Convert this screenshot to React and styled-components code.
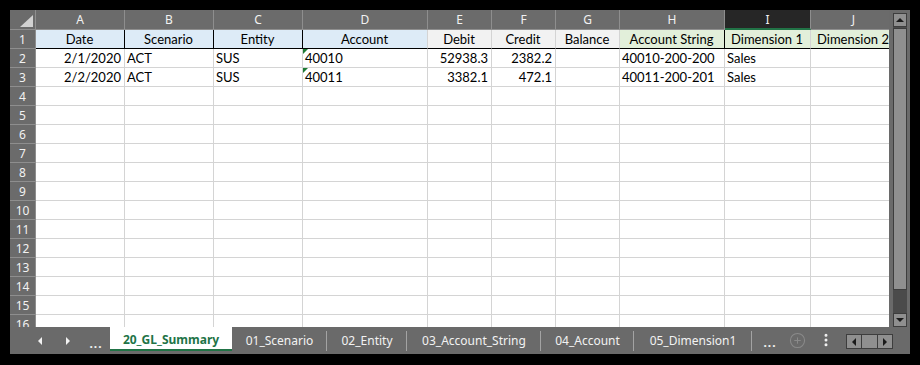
import React from 'react';
import styled, { createGlobalStyle } from 'styled-components';
import { CirclePlus, EllipsisVertical } from 'lucide-react';

const Global = createGlobalStyle`
  body {
    margin: 0;
    background: #000;
  }
`;

const Frame = styled.div`
  width: 920px;
  height: 365px;
  box-sizing: border-box;
  padding: 10px 10px 11px 10px;
  background: #000;
  display: flex;
  flex-direction: column;
`;

const Main = styled.div`
  display: flex;
  height: 317px;
`;

const Viewport = styled.div`
  flex: 1;
  overflow: hidden;
  background: #fff;
`;

const Sheet = styled.div`
  display: grid;
  grid-template-columns: 26px 89px 89px 89px 125px 64px 64px 64px 105px 86px 86px;
  grid-template-rows: 20px;
  grid-auto-rows: 19px;
  width: max-content;
`;

const ColHead = styled.div`
  box-sizing: border-box;
  background: ${(p) => (p.$selected ? '#262626' : '#6b6b6b')};
  color: #f2f2f2;
  font-family: "Noto Sans", sans-serif;
  font-size: 12px;
  display: flex;
  align-items: center;
  justify-content: center;
  border-right: 1px solid #8e8e8e;
  border-bottom: ${(p) => (p.$selected ? '2px solid #217346' : '1px solid #8e8e8e')};
  position: relative;
`;

const Corner = styled(ColHead)`
  &::after {
    content: '';
    position: absolute;
    right: 2px;
    bottom: 2px;
    width: 0;
    height: 0;
    border-left: 13px solid transparent;
    border-bottom: 12px solid #d2d2d2;
  }
`;

const RowHead = styled.div`
  box-sizing: border-box;
  background: #6b6b6b;
  color: #f2f2f2;
  font-family: "Noto Sans", sans-serif;
  font-size: 12px;
  display: flex;
  align-items: center;
  justify-content: center;
  border-right: 1px solid #8e8e8e;
  border-bottom: 1px solid #8e8e8e;
`;

const Cell = styled.div`
  box-sizing: border-box;
  position: relative;
  background: ${(p) => p.$fill || '#fff'};
  color: #000;
  font-family: Lato, "Liberation Sans", sans-serif;
  font-size: 13px;
  line-height: 18px;
  padding: 0 3px 0 2px;
  white-space: nowrap;
  overflow: hidden;
  text-align: ${(p) => p.$align || 'left'};
  border-right: 1px solid ${(p) => (p.$edge ? '#000' : '#d4d4d4')};
  border-bottom: 1px solid ${(p) => (p.$head ? '#000' : '#d4d4d4')};
`;

const TextFlag = styled.span`
  position: absolute;
  left: 0;
  top: 0;
  width: 0;
  height: 0;
  border-top: 5px solid #1e7b34;
  border-right: 5px solid transparent;
`;

const VScroll = styled.div`
  width: 21px;
  background: #6a6a6a;
  padding: 3px 3px 0 4px;
  box-sizing: border-box;
  display: flex;
  flex-direction: column;
`;

const ScrollButton = styled.div`
  box-sizing: border-box;
  width: 14px;
  height: 14px;
  background: #8f8f8f;
  border: 1px solid #3d3d3d;
  display: flex;
  align-items: center;
  justify-content: center;
  flex-shrink: 0;
`;

const Track = styled.div`
  flex: 1;
  background: #4b4b4b;
  display: flex;
  flex-direction: column;
  padding: 1px 0;
`;

const Thumb = styled.div`
  box-sizing: border-box;
  height: ${(p) => p.$h}px;
  background: #8f8f8f;
  border: 1px solid #3d3d3d;
`;

const Arrow = styled.span`
  width: 0;
  height: 0;
  ${(p) => p.$dir === 'up' && 'border-left: 4px solid transparent; border-right: 4px solid transparent; border-bottom: 4px solid #1a1a1a;'}
  ${(p) => p.$dir === 'down' && 'border-left: 4px solid transparent; border-right: 4px solid transparent; border-top: 4px solid #1a1a1a;'}
  ${(p) => p.$dir === 'left' && `border-top: 4px solid transparent; border-bottom: 4px solid transparent; border-right: 4px solid ${p.$color || '#1a1a1a'};`}
  ${(p) => p.$dir === 'right' && `border-top: 4px solid transparent; border-bottom: 4px solid transparent; border-left: 4px solid ${p.$color || '#1a1a1a'};`}
`;

const TabBar = styled.div`
  height: 27px;
  background: #6a6a6a;
  display: flex;
  align-items: flex-start;
  font-family: "Noto Sans", sans-serif;
  font-size: 12px;
  color: #f2f2f2;
`;

const Nav = styled.div`
  width: 100px;
  height: 27px;
  display: flex;
  align-items: center;
  padding-left: 26px;
  box-sizing: border-box;
`;

const NavSlot = styled.div`
  width: ${(p) => p.$w}px;
  height: 26px;
  display: flex;
  align-items: center;
  justify-content: center;
  flex-shrink: 0;
  color: #f2f2f2;
`;

const Dots = styled.span`
  font-weight: 700;
  letter-spacing: 1px;
  padding-top: 5px;
  font-size: 12px;
`;

const ActiveTab = styled.div`
  width: 122px;
  height: 24px;
  flex-shrink: 0;
  box-sizing: border-box;
  background: #fff;
  border-bottom: 2px solid #217346;
  color: #217346;
  font-weight: 700;
  display: flex;
  align-items: center;
  justify-content: center;
  padding-top: 3px;
`;

const Tab = styled.div`
  width: ${(p) => p.$w}px;
  height: 24px;
  flex-shrink: 0;
  display: flex;
  align-items: center;
  justify-content: center;
  position: relative;
  box-sizing: border-box;
  white-space: nowrap;
  padding-top: 3px;

  &::after {
    content: '';
    position: absolute;
    right: 0;
    top: 4px;
    height: 20px;
    width: 1px;
    background: #a3a3a3;
  }
`;

const HScroll = styled.div`
  display: flex;
  margin-top: 7px;
  height: 15px;
  background: #8f8f8f;
  border: 1px solid #3d3d3d;
  box-sizing: border-box;
`;

const HButton = styled.div`
  width: ${(p) => p.$w}px;
  height: 13px;
  display: flex;
  align-items: center;
  justify-content: center;
  border-right: ${(p) => (p.$split ? '1px solid #3d3d3d' : 'none')};
  box-sizing: border-box;
`;

const headers = ['A', 'B', 'C', 'D', 'E', 'F', 'G', 'H', 'I', 'J'];

const blue = '#ddebf7';
const gray = '#f2f2f2';
const green = '#e2efda';

const titleRow = [
  { v: 'Date', fill: blue, edge: true },
  { v: 'Scenario', fill: blue, edge: true },
  { v: 'Entity', fill: blue, edge: true },
  { v: 'Account', fill: blue },
  { v: 'Debit', fill: gray },
  { v: 'Credit', fill: gray },
  { v: 'Balance', fill: gray },
  { v: 'Account String', fill: green, edge: true },
  { v: 'Dimension 1', fill: green },
  { v: 'Dimension 2', fill: green },
];

const align = ['right', 'left', 'left', 'left', 'right', 'right', 'right', 'left', 'left', 'left'];

const data = [
  ['2/1/2020', 'ACT', 'SUS', '40010', '52938.3', '2382.2', '', '40010-200-200', 'Sales', ''],
  ['2/2/2020', 'ACT', 'SUS', '40011', '3382.1', '472.1', '', '40011-200-201', 'Sales', ''],
];

const tabs = [
  { name: '01_Scenario', w: 95 },
  { name: '02_Entity', w: 80 },
  { name: '03_Account_String', w: 134 },
  { name: '04_Account', w: 93 },
  { name: '05_Dimension1', w: 118 },
];

function App() {
  const rows = [];
  for (let r = 1; r <= 16; r++) {
    rows.push(<RowHead key={'h' + r}>{r}</RowHead>);
    for (let c = 0; c < 10; c++) {
      if (r === 1) {
        const t = titleRow[c];
        rows.push(
          <Cell key={r + '-' + c} $fill={t.fill} $edge={t.edge} $head $align="center">
            {t.v}
          </Cell>
        );
      } else if (r <= 3) {
        const v = data[r - 2][c];
        rows.push(
          <Cell key={r + '-' + c} $align={align[c]}>
            {c === 3 && <TextFlag />}
            {v}
          </Cell>
        );
      } else {
        rows.push(<Cell key={r + '-' + c} />);
      }
    }
  }

  return (
    <Frame>
      <Global />
      <Main>
        <Viewport>
          <Sheet>
            <Corner />
            {headers.map((h) => (
              <ColHead key={h} $selected={h === 'I'}>{h}</ColHead>
            ))}
            {rows}
          </Sheet>
        </Viewport>
        <VScroll>
          <ScrollButton><Arrow $dir="up" /></ScrollButton>
          <Track>
            <Thumb $h={262} />
          </Track>
          <ScrollButton><Arrow $dir="down" /></ScrollButton>
        </VScroll>
      </Main>
      <TabBar>
        <Nav>
          <NavSlot $w={8}><Arrow $dir="left" $color="#f2f2f2" /></NavSlot>
          <NavSlot $w={20} />
          <NavSlot $w={8}><Arrow $dir="right" $color="#f2f2f2" /></NavSlot>
          <NavSlot $w={14} />
          <NavSlot $w={20}><Dots>...</Dots></NavSlot>
        </Nav>
        <ActiveTab>20_GL_Summary</ActiveTab>
        {tabs.map((t) => (
          <Tab key={t.name} $w={t.w}>{t.name}</Tab>
        ))}
        <NavSlot $w={36}><Dots>...</Dots></NavSlot>
        <NavSlot $w={18}><CirclePlus size={17} color="#8a8a8a" strokeWidth={1.5} /></NavSlot>
        <NavSlot $w={40}><EllipsisVertical size={16} color="#f2f2f2" strokeWidth={2.5} /></NavSlot>
        <HScroll>
          <HButton $w={15} $split><Arrow $dir="left" /></HButton>
          <HButton $w={16} $split />
          <HButton $w={14}><Arrow $dir="right" /></HButton>
        </HScroll>
      </TabBar>
    </Frame>
  );
}

export default App;
